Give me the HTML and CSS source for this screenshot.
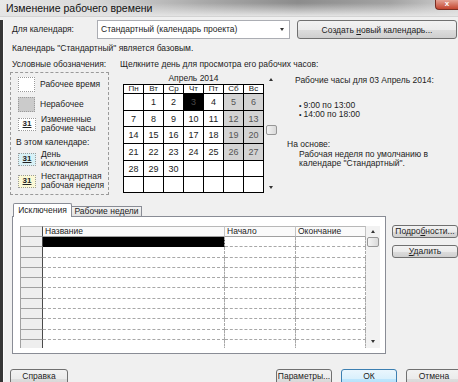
FILE: index.html
```html
<!DOCTYPE html>
<html lang="ru">
<head>
  <meta charset="UTF-8" />
  <title>Изменение рабочего времени</title>
  <link rel="stylesheet" href="styles.css">
</head>
<body>

<div class="window">
  <div class="titlebar">
    <span class="title">Изменение рабочего времени</span>
    <span class="close">x</span>
  </div>

  <div class="content">
    <div class="top-row">
      <span class="label">Для календаря:</span>
      <div class="combo">
        <span>Стандартный (календарь проекта)</span>
        <span class="tri-down combo-arrow"></span>
      </div>
      <button class="btn btn-wide">Создать <u>н</u>овый календарь...</button>
    </div>

    <div class="note">Календарь "Стандартный" является базовым.</div>

    <div class="middle">
      <!-- Legend -->
      <div class="legend">
        <div class="legend-title">Условные обозначения:</div>
        <div class="legend-box">
          <div class="legend-item item-1">
            <span class="sw sw-work"></span>
            <span>Рабочее время</span>
          </div>
          <div class="legend-item item-2">
            <span class="sw sw-off"></span>
            <span>Нерабочее</span>
          </div>
          <div class="legend-item item-3">
            <span class="sw sw-day">31</span>
            <span>Измененные<br>рабочие часы</span>
          </div>
          <div class="legend-sub">В этом календаре:</div>
          <div class="legend-item item-4">
            <span class="sw sw-day sw-exc">31</span>
            <span>День<br>исключения</span>
          </div>
          <div class="legend-item item-5">
            <span class="sw sw-day sw-week">31</span>
            <span>Нестандартная<br>рабочая неделя</span>
          </div>
        </div>
      </div>

      <!-- Calendar + info -->
      <div class="cal-part">
        <div class="cal-hint">Щелкните день для просмотра его рабочих часов:</div>
        <div class="cal-body">
          <div class="cal-month">
            <div class="month-name">Апрель 2014</div>
            <div class="cal-grid" id="calGrid"></div>
          </div>
          <div class="cal-scroll">
            <span class="tri-up"></span>
            <span class="thumb cal-thumb"></span>
            <span class="tri-down cal-down"></span>
          </div>
          <div class="info">
            <div class="info-head">Рабочие часы для 03 Апрель 2014:</div>
            <ul class="hours">
              <li>9:00 по 13:00</li>
              <li>14:00 по 18:00</li>
            </ul>
            <div class="based">На основе:</div>
            <div class="based-text">Рабочая неделя по умолчанию в<br>календаре "Стандартный".</div>
          </div>
        </div>
      </div>
    </div>

    <div class="tabs-area">
      <div class="tabs-main">
        <div class="tab-strip">
          <div class="tab active">Исключения</div>
          <div class="tab">Рабочие недели</div>
        </div>
        <div class="tab-panel">
          <div class="grid">
            <div class="grid-cols" id="gridRows">
              <div class="grow ghead">
                <div class="gc rh"></div>
                <div class="gc">Название</div>
                <div class="gc">Начало</div>
                <div class="gc">Окончание</div>
              </div>
            </div>
            <div class="gscroll">
              <span class="tri-up"></span>
              <span class="thumb grid-thumb"></span>
              <span class="tri-down grid-down"></span>
            </div>
          </div>
        </div>
      </div>
      <div class="side">
        <button class="btn btn-side">Подро<u>б</u>ности...</button>
        <button class="btn btn-side"><u>У</u>далить</button>
      </div>
    </div>

    <div class="footer">
      <button class="btn btn-foot">Справка</button>
      <div class="footer-right">
        <button class="btn btn-foot">Параметры...</button>
        <button class="btn btn-foot btn-default">ОК</button>
        <button class="btn btn-foot">Отмена</button>
      </div>
    </div>
  </div>
</div>

<script>
  // Calendar: April 2014 starts on Tuesday
  const grid = document.getElementById('calGrid');
  const heads = ['Пн', 'Вт', 'Ср', 'Чт', 'Пт', 'Сб', 'Вс'];
  heads.forEach(h => {
    const cell = document.createElement('div');
    cell.className = 'cal-cell cal-head';
    cell.textContent = h;
    grid.appendChild(cell);
  });
  for (let i = 0; i < 42; i++) {
    const day = i; // offset 1: Monday empty
    const cell = document.createElement('div');
    cell.className = 'cal-cell';
    if (day >= 1 && day <= 30) {
      cell.textContent = day;
      if (i % 7 >= 5) cell.classList.add('weekend');
      if (day === 3) cell.classList.add('selected');
    }
    grid.appendChild(cell);
  }

  // Exceptions table rows
  const rows = document.getElementById('gridRows');
  for (let r = 0; r < 11; r++) {
    const row = document.createElement('div');
    row.className = 'grow';
    row.innerHTML = '<div class="gc rh"></div><div class="gc' + (r === 0 ? ' picked' : '') +
      '"></div><div class="gc"></div><div class="gc"></div>';
    rows.appendChild(row);
  }
</script>

</body>
</html>
```

FILE: styles.css
```css
body {
  margin: 0;
  background: #f0f0f0;
}

.window {
  width: 458px;
  height: 382px;
  overflow: hidden;
  background: #f0f0f0;
  font-family: 'Liberation Sans', Arial, sans-serif;
  font-size: 8.5px;
  line-height: 9px;
  color: #1c1c1c;
}

/* Title bar */
.titlebar {
  height: 17px;
  box-sizing: border-box;
  display: flex;
  align-items: center;
  padding-left: 6px;
  border-bottom: 1px solid #d4d4d4;
  background:
    linear-gradient(to bottom, rgba(236, 236, 236, 0) 20%, #e4e4e4 100%),
    linear-gradient(to right, #e8e8e8 0%, #d8d8d8 20%, #a8a8a8 45%, #8c8c8c 65%, #a2a2a2 85%, #d0d0d0 100%);
  font-size: 10.5px;
  color: #111;
}

.close {
  margin-left: auto;
  align-self: flex-start;
  width: 22px;
  height: 9px;
  background: linear-gradient(#e4a294, #c4452f);
  border: 1px solid #7a2e22;
  border-top: none;
  border-right: none;
  border-radius: 0 0 0 4px;
  color: #fff;
  font-size: 8px;
  font-weight: bold;
  line-height: 7px;
  text-align: center;
}

.content {
  height: 365px;
  border-left: 3px solid #353535;
  box-shadow: inset 1px 0 #fbfbfb;
  padding-left: 7px;
}

/* Buttons */
.btn {
  box-sizing: border-box;
  margin: 0;
  padding: 0;
  border: 1px solid #707070;
  border-radius: 3px;
  background: linear-gradient(#f2f2f2 0%, #ebebeb 50%, #dddddd 51%, #cfcfcf 100%);
  font-family: inherit;
  font-size: 8.5px;
  color: #1c1c1c;
  text-align: center;
}

.btn-default {
  border-color: #3c7fb1;
  background: linear-gradient(#eaf6fd 0%, #d9f0fc 50%, #bee6fd 51%, #a7d9f5 100%);
}

/* Top row */
.top-row {
  display: flex;
  align-items: center;
  margin-top: 3px;
  height: 19px;
}

.label {
  width: 85px;
  padding-left: 2px;
}

.combo {
  width: 193px;
  height: 19px;
  box-sizing: border-box;
  display: flex;
  align-items: center;
  padding-left: 3px;
  border: 1px solid #abadb3;
  background: #fff;
}

.combo-arrow {
  margin-left: auto;
  margin-right: 5px;
}

.btn-wide {
  margin-left: 7px;
  width: 160px;
  height: 19px;
}

.note {
  margin-top: 5px;
  padding-left: 2px;
}

/* Middle section */
.middle {
  display: flex;
  margin-top: 7px;
}

.legend {
  width: 100px;
}

.legend-title {
  padding-left: 2px;
  white-space: nowrap;
}

.legend-box {
  box-sizing: border-box;
  width: 99px;
  height: 123px;
  margin-top: 3px;
  padding: 3px 0 0 7px;
  border: 1px dashed #9a9a9a;
}

.legend-item {
  display: flex;
  align-items: center;
  gap: 5px;
  height: 16px;
  white-space: nowrap;
}

.item-2 { margin-top: 4px; }
.item-3 { margin-top: 3px; height: 18px; }
.item-4 { margin-top: 3px; height: 18px; }
.item-5 { margin-top: 4px; height: 18px; }

.legend-sub {
  margin-top: 5px;
  margin-left: -2px;
}

.sw {
  box-sizing: border-box;
  flex: none;
  width: 17px;
  height: 15px;
  border: 1px dotted #9a9a9a;
  background: #fff;
}

.sw-off {
  background: #cbcbcb;
}

.sw-day {
  width: 18px;
  height: 13px;
  font-size: 8px;
  font-weight: bold;
  line-height: 10px;
  text-align: center;
  text-decoration: underline;
  color: #222;
}

.sw-exc {
  background: #d8f1f6;
}

.sw-week {
  background: #fbf9d6;
}

/* Calendar */
.cal-part {
  margin-left: 10px;
}

.cal-hint {
  white-space: nowrap;
}

.cal-body {
  display: flex;
  margin-top: 5px;
}

.cal-month {
  padding-left: 3px;
}

.month-name {
  height: 10px;
  text-align: center;
}

.cal-grid {
  display: grid;
  grid-template-columns: repeat(7, 19px);
  grid-template-rows: 8px 16px 15px 16px 16px 15px 15px;
  gap: 1px;
  border: 1px solid #000;
  background: #000;
}

.cal-cell {
  background: #fff;
  text-align: center;
  line-height: 16px;
  font-size: 9px;
  color: #222;
}

.cal-cell.cal-head {
  font-size: 8px;
  line-height: 8px;
}

.cal-cell.weekend {
  background: #d3d3d3;
  color: #555;
}

.cal-cell.selected {
  background: #000;
  color: #4a4a4a;
}

.cal-scroll {
  width: 12px;
  margin-left: 1px;
  display: flex;
  flex-direction: column;
  align-items: center;
  padding-top: 4px;
}

.tri-up,
.tri-down {
  display: block;
  width: 0;
  height: 0;
  border-left: 2.5px solid transparent;
  border-right: 2.5px solid transparent;
}

.tri-up {
  border-bottom: 3px solid #333;
}

.tri-down {
  border-top: 3px solid #333;
}

.thumb {
  box-sizing: border-box;
  display: block;
  border: 1px solid #979797;
  border-radius: 2px;
  background: linear-gradient(to right, #f4f4f4, #dadada);
}

.cal-thumb {
  width: 11px;
  height: 10px;
  margin-top: 44px;
}

.cal-down {
  margin-top: 51px;
}

/* Info */
.info {
  margin-left: 10px;
  padding-top: 2px;
  white-space: nowrap;
}

.info-head {
  padding-left: 8px;
}

.hours {
  margin: 16px 0 0 0;
  padding: 0 0 0 12px;
  list-style: none;
}

.hours li::before {
  content: '\2022';
  margin-right: 2px;
  font-size: 7px;
}

.based {
  margin-top: 21px;
}

.based-text {
  margin-top: 1px;
  padding-left: 12px;
}

/* Tabs */
.tabs-area {
  display: flex;
  margin-top: 8px;
}

.tabs-main {
  margin-left: 2px;
  width: 377px;
}

.tab-strip {
  display: flex;
  align-items: flex-end;
  height: 13px;
  padding-left: 1px;
  position: relative;
  z-index: 1;
}

.tab {
  box-sizing: border-box;
  width: 70px;
  height: 10px;
  display: flex;
  align-items: center;
  justify-content: center;
  border: 1px solid #898c95;
  border-bottom: none;
  border-left: none;
  background: linear-gradient(#f3f3f3, #e2e2e2);
}

.tab.active {
  width: 59px;
  height: 14px;
  margin-bottom: -1px;
  border-left: 1px solid #898c95;
  border-radius: 2px 2px 0 0;
  background: #fff;
}

.tab-panel {
  box-sizing: border-box;
  height: 138px;
  border: 1px solid #898c95;
  background: #fff;
  padding: 9px 0 0 7px;
}

.grid {
  display: flex;
  width: 360px;
  height: 122px;
  overflow: hidden;
}

.grid-cols {
  width: 346px;
}

.grow {
  display: grid;
  grid-template-columns: 23px 182px 71px 70px;
  height: 10.3px;
}

.grow.ghead {
  height: 11px;
}

.gc {
  box-sizing: border-box;
  border-bottom: 1px dashed #a8a8a8;
  border-right: 1px dashed #a8a8a8;
  padding-left: 2px;
  line-height: 10px;
  white-space: nowrap;
}

.gc.rh {
  border-left: 1px solid #a0a0a0;
  border-right: 1px solid #4a4a4a;
  border-bottom: 1px solid #a0a0a0;
  background: #eeeeee;
}

.ghead .gc {
  border-top: 1px solid #b8b8b8;
  border-bottom: 1px solid #a0a0a0;
  border-right: 1px solid #c4c4c4;
  line-height: 9px;
  background: #fafafa;
}

.ghead .gc.rh {
  border-right: 1px solid #4a4a4a;
  background: #eeeeee;
}

.gc.picked {
  background: #000;
  border-bottom-color: #000;
}

.gscroll {
  width: 14px;
  display: flex;
  flex-direction: column;
  align-items: center;
  padding-top: 4px;
  background: #f2f2f2;
}

.grid-thumb {
  width: 12px;
  height: 10px;
  margin-top: 4px;
}

.grid-down {
  margin-top: 93px;
}

/* Side buttons */
.side {
  display: flex;
  flex-direction: column;
  gap: 7px;
  margin-left: 6px;
  padding-top: 22px;
}

.btn-side {
  width: 66px;
  height: 13px;
  line-height: 11px;
}

/* Footer */
.footer {
  display: flex;
  width: 452px;
  margin-top: 15px;
}

.footer-right {
  display: flex;
  gap: 9px;
  margin-left: auto;
}

.btn-foot {
  width: 56px;
  height: 20px;
  padding-bottom: 6px;
}

.footer > .btn-foot {
  width: 58px;
}
```
